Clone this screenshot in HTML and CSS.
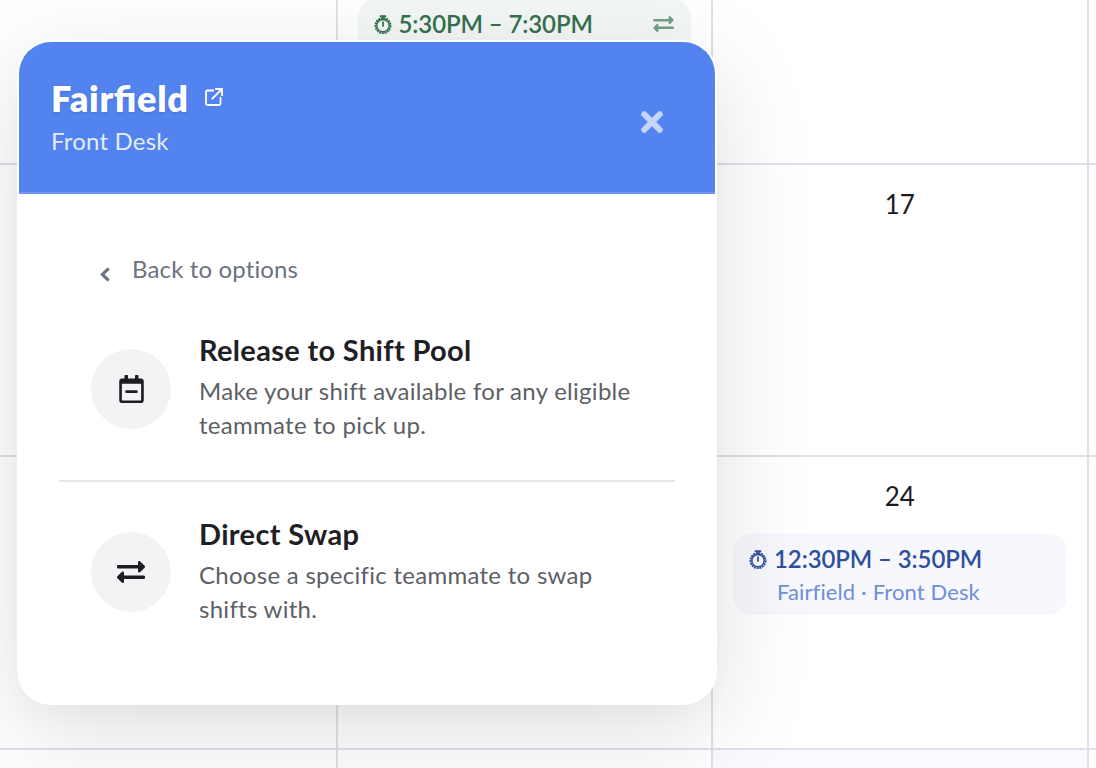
FILE: index.html
```html
<!DOCTYPE html>
<html lang="en">
<head>
<meta charset="utf-8">
<title>Shift options</title>
<link rel="stylesheet" href="styles.css">
</head>
<body>
<div class="viewport">
<div class="calendar">
  <div class="cell"></div>
  <div class="cell">
    <div class="shift shift-green">
      <div class="shift-line">
        <svg class="clock" viewBox="0 0 18 19"><circle cx="9" cy="10.600" r="7.400" fill="none" stroke="currentColor" stroke-width="2.200" stroke-dasharray="2 .7"/><circle cx="9" cy="10.600" r="6.100" fill="none" stroke="currentColor" stroke-width="1.300"/><path d="M6.500 1.200h5M9 1.500V4M9 7v4" fill="none" stroke="currentColor" stroke-width="1.700" stroke-linecap="round"/></svg>
        <span class="shift-time">5:30PM – 7:30PM</span>
        <svg class="shift-swap" viewBox="0 56 512 400"><path fill="currentColor" d="M0 168v-16c0-13.255 10.745-24 24-24h360V80c0-21.367 25.899-32.042 40.971-16.971l80 80c9.372 9.373 9.372 24.569 0 33.941l-80 80C409.956 271.982 384 261.456 384 240v-48H24c-13.255 0-24-10.745-24-24zm488 152H128v-48c0-21.314-25.862-32.080-40.971-16.971l-80 80c-9.372 9.373-9.372 24.569 0 33.941l80 80C102.057 463.997 128 453.437 128 432v-48h360c13.255 0 24-10.745 24-24v-16c0-13.255-10.745-24-24-24z"/></svg>
      </div>
    </div>
  </div>
  <div class="cell"></div>
  <div class="cell cell-edge"></div>
  <div class="cell"></div>
  <div class="cell"></div>
  <div class="cell"><div class="day">17</div></div>
  <div class="cell cell-edge"></div>
  <div class="cell"></div>
  <div class="cell"></div>
  <div class="cell">
    <div class="day">24</div>
    <div class="shift shift-blue">
      <div class="shift-line">
        <svg class="clock" viewBox="0 0 18 19"><circle cx="9" cy="10.600" r="7.400" fill="none" stroke="currentColor" stroke-width="2.200" stroke-dasharray="2 .7"/><circle cx="9" cy="10.600" r="6.100" fill="none" stroke="currentColor" stroke-width="1.300"/><path d="M6.500 1.200h5M9 1.500V4M9 7v4" fill="none" stroke="currentColor" stroke-width="1.700" stroke-linecap="round"/></svg>
        <span class="shift-time">12:30PM – 3:50PM</span>
      </div>
      <div class="shift-place">Fairfield · Front Desk</div>
    </div>
  </div>
  <div class="cell cell-edge"></div>
  <div class="cell"></div>
  <div class="cell"></div>
  <div class="cell cell-tint"></div>
  <div class="cell cell-edge"></div>
</div>
</div>

<section class="popover">
  <header class="pop-head">
    <div class="pop-titles">
      <h1 class="pop-title">Fairfield
        <svg class="ext" viewBox="0 0 20 20"><path d="M9 3.500H3.500A1.500 1.500 0 0 0 2 5v11.500A1.500 1.500 0 0 0 3.500 18H15a1.500 1.500 0 0 0 1.500-1.500V11M8.500 11.500 18 2M12 2h6v6" fill="none" stroke="currentColor" stroke-width="1.800" stroke-linecap="square"/></svg>
      </h1>
      <div class="pop-sub">Front Desk</div>
    </div>
    <svg class="close" viewBox="0 0 352 512"><path fill="currentColor" d="M242.720 256l100.070-100.070c12.280-12.280 12.280-32.190 0-44.480l-22.240-22.240c-12.280-12.280-32.190-12.280-44.480 0L176 189.280 75.930 89.210c-12.280-12.280-32.190-12.280-44.480 0L9.210 111.450c-12.280 12.280-12.280 32.190 0 44.480L109.280 256 9.210 356.070c-12.280 12.280-12.280 32.190 0 44.480l22.240 22.240c12.280 12.280 32.200 12.280 44.480 0L176 322.720l100.070 100.070c12.280 12.280 32.200 12.280 44.480 0l22.240-22.240c12.280-12.280 12.280-32.190 0-44.480L242.720 256z"/></svg>
  </header>
  <div class="pop-body">
    <div class="back">
      <svg class="chev" viewBox="0 0 320 512" preserveAspectRatio="none"><path fill="currentColor" stroke="currentColor" stroke-width="30" d="M34.520 239.030L228.870 44.690c9.370-9.370 24.570-9.370 33.940 0l22.670 22.670c9.360 9.360 9.370 24.520.04 33.900L131.490 256l154.020 154.750c9.340 9.380 9.320 24.540-.04 33.900l-22.670 22.670c-9.370 9.370-24.570 9.370-33.940 0L34.520 272.970c-9.370-9.370-9.370-24.570 0-33.940z"/></svg>
      <span>Back to options</span>
    </div>
    <div class="option">
      <div class="opt-icon">
        <svg class="cal" viewBox="0 0 448 512"><path fill="currentColor" d="M124 328c-6.600 0-12-5.400-12-12v-24c0-6.600 5.400-12 12-12h200c6.600 0 12 5.400 12 12v24c0 6.600-5.400 12-12 12H124zm324-216v352c0 26.500-21.500 48-48 48H48c-26.500 0-48-21.500-48-48V112c0-26.500 21.500-48 48-48h48V12c0-6.600 5.400-12 12-12h40c6.600 0 12 5.400 12 12v52h128V12c0-6.600 5.400-12 12-12h40c6.600 0 12 5.400 12 12v52h48c26.500 0 48 21.500 48 48zm-48 346V160H48v298c0 3.300 2.700 6 6 6h340c3.300 0 6-2.700 6-6z"/></svg>
      </div>
      <div class="opt-text">
        <h2 class="opt-title">Release to Shift Pool</h2>
        <p class="opt-desc">Make your shift available for any eligible teammate to pick up.</p>
      </div>
    </div>
    <div class="rule"></div>
    <div class="option">
      <div class="opt-icon">
        <svg class="swap" viewBox="0 56 512 400"><path fill="currentColor" d="M0 168v-16c0-13.255 10.745-24 24-24h360V80c0-21.367 25.899-32.042 40.971-16.971l80 80c9.372 9.373 9.372 24.569 0 33.941l-80 80C409.956 271.982 384 261.456 384 240v-48H24c-13.255 0-24-10.745-24-24zm488 152H128v-48c0-21.314-25.862-32.080-40.971-16.971l-80 80c-9.372 9.373-9.372 24.569 0 33.941l80 80C102.057 463.997 128 453.437 128 432v-48h360c13.255 0 24-10.745 24-24v-16c0-13.255-10.745-24-24-24z"/></svg>
      </div>
      <div class="opt-text">
        <h2 class="opt-title">Direct Swap</h2>
        <p class="opt-desc">Choose a specific teammate to swap shifts with.</p>
      </div>
    </div>
  </div>
</section>
</body>
</html>
```
FILE: styles.css
```css
html, body {
  margin: 0;
  height: 100%;
  overflow: hidden;
  background: #fff;
  font-family: "Lato", "Noto Sans", sans-serif;
  color: #1f2024;
}
.viewport {
  width: 1096px;
  height: 768px;
  overflow: hidden;
}
.calendar {
  display: grid;
  grid-template-columns: 375.500px 375.500px 375.500px 20px;
  grid-template-rows: repeat(4, 292.500px);
  margin: -128px 0 0 -38px;
  width: 1200px;
}
.cell {
  border-right: 2px solid #dfe0ea;
  border-bottom: 2px solid #dfe0ea;
  box-sizing: border-box;
  padding: 0 20px;
  display: flex;
  flex-direction: column;
}
.cell-edge { border-right: 0; }
.cell-tint { background: #fafbff; }
.day {
  font-size: 26px;
  line-height: 34px;
  text-align: center;
  margin: 22px 0 20px;
  color: #1b1b1f;
}
.shift {
  border-radius: 20px;
  padding: 9px 17px 10px 16px;
  box-sizing: border-box;
  height: 82px;
}
.shift-line { display: flex; align-items: center; gap: 7px; }
.clock { width: 18px; height: 19px; flex: none; }
.shift-time { font-size: 24px; line-height: 34px; font-weight: 600; letter-spacing: -.1px; }
.shift-swap { width: 21px; height: 16px; margin-left: auto; opacity: .65; }
.shift-green { background: #f3f7f5; color: #35704f; margin-top: 126px; }
.shift-blue { background: #f6f8fe; color: #2f4f9d; }
.shift-place { font-size: 22px; line-height: 32px; color: #6f8fd6; padding-left: 28px; letter-spacing: .12px; }
.popover {
  position: absolute;
  left: 17px;
  top: 40px;
  width: 700px;
  height: 665px;
  box-sizing: border-box;
  border: 2px solid #fff;
  border-radius: 34px;
  background: #fff;
  box-shadow: 0 28px 100px rgba(0,0,0,.13), 0 8px 24px rgba(0,0,0,.02);
  overflow: hidden;
}
.pop-head {
  height: 152px;
  box-sizing: border-box;
  background: #5283ee;
  border-bottom: 2px solid #6f97f0;
  display: flex;
  align-items: center;
  justify-content: space-between;
  padding: 0 52px 0 32px;
  color: #fff;
}
.pop-title {
  margin: 0;
  font-size: 36px;
  line-height: 44px;
  font-weight: 800;
  letter-spacing: .7px;
  font-feature-settings: "liga" 1;
  display: flex;
  align-items: center;
  gap: 15px;
  text-shadow: 0 1px 3px rgba(0,0,0,.12);
}
.ext { width: 20px; height: 20px; margin-top: -3px; }
.pop-sub { font-size: 24px; line-height: 34px; color: #e3ebfc; margin-top: 4px; letter-spacing: .2px; }
.close { width: 22px; height: 32px; color: #c6d6fa; margin-top: 10px; }
.pop-body { padding: 58px 40px 0; display: flex; flex-direction: column; }
.back {
  display: flex;
  align-items: center;
  gap: 22px;
  padding-left: 41px;
  font-size: 24px;
  line-height: 34px;
  color: #6b7280;
  letter-spacing: .14px;
}
.chev { width: 10px; height: 15px; margin-top: 11px; }
.option { display: flex; gap: 28px; align-items: center; padding: 0 32px; }
.back + .option { margin-top: 47px; }
.back + .option .opt-text { margin: -1px 0 1px; }
.opt-icon {
  flex: none;
  width: 80px;
  height: 80px;
  border-radius: 50%;
  background: #f2f3f5;
  display: flex;
  align-items: center;
  justify-content: center;
  color: #1c1d21;
}
.cal { width: 25px; height: 28px; }
.swap { width: 28px; height: 22px; }
.opt-text { flex: 1; padding-bottom: 2px; }
.opt-title { margin: 0; font-size: 29px; line-height: 36px; font-weight: 700; color: #1f2024; letter-spacing: .33px; }
.opt-desc { margin: 6px 0 0; font-size: 24px; line-height: 34px; color: #5c5f66; letter-spacing: .28px; }
.rule { height: 2px; background: #e6e7ea; margin: 35px 0 34px; }
```
